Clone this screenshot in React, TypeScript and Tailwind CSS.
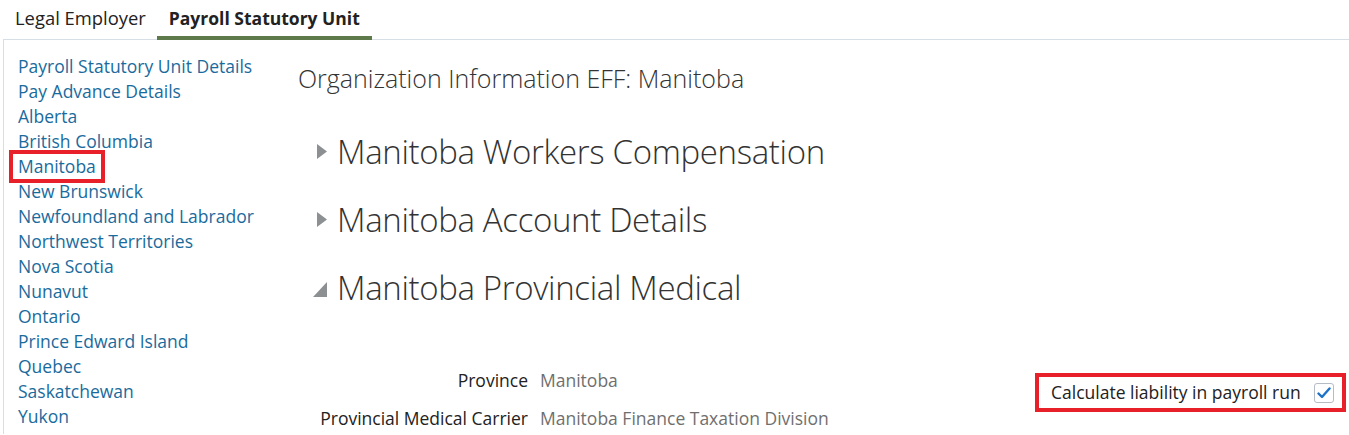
import { useState } from 'react';

const PROVINCES = [
  'Payroll Statutory Unit Details',
  'Pay Advance Details',
  'Alberta',
  'British Columbia',
  'Manitoba',
  'New Brunswick',
  'Newfoundland and Labrador',
  'Northwest Territories',
  'Nova Scotia',
  'Nunavut',
  'Ontario',
  'Prince Edward Island',
  'Quebec',
  'Saskatchewan',
  'Yukon',
];

function Section({ title, open }: { title: string; open?: boolean }) {
  return (
    <div className="flex items-center h-[68px]">
      <div className="w-[39px] flex justify-end pr-[10px]">
        {open ? (
          <svg width="14" height="15" viewBox="0 0 14 15" className="mt-[4px]">
            <polygon points="0,15 14,15 14,0" fill="#8d9093" />
          </svg>
        ) : (
          <svg width="10" height="15" viewBox="0 0 10 15">
            <polygon points="0,0 10,7.5 0,15" fill="#8d9093" />
          </svg>
        )}
      </div>
      <span className="text-[33px] font-light tracking-[-0.35px] text-[#333333] leading-none">{title}</span>
    </div>
  );
}

export default function App() {
  const [checked, setChecked] = useState(true);

  return (
    <div className="w-full h-[435px] bg-white overflow-hidden font-['Open_Sans',sans-serif] text-[#222]">
      <div className="flex h-[40px] items-stretch">
        <div className="pl-[15px] pr-[11px] flex items-center text-[18.4px] pb-[4px]">Legal Employer</div>
        <div className="px-[12px] flex items-center text-[17.5px] font-bold border-b-[4px] border-[#5f7a4a]">
          Payroll Statutory Unit
        </div>
      </div>
      <div className="ml-[3px] border-l border-t border-[#d6dfe6] flex h-[395px] -mt-px">
        <ul className="w-[294px] pl-[14px] pt-[14px] text-[17.5px] leading-[25px] text-[#1a6b9d]">
          {PROVINCES.map((p) => (
            <li key={p}>
              {p === 'Manitoba' ? (
                <span className="relative">
                  {p}
                  <span className="absolute -left-[9px] -right-[9px] -top-[4px] -bottom-[5px] border-[4px] border-[#e8202a]" />
                </span>
              ) : (
                p
              )}
            </li>
          ))}
        </ul>
        <div className="flex-1 pt-[22px]">
          <h1 className="text-[25px] font-light text-[#333333] leading-[32px]">
            Organization Information EFF: Manitoba
          </h1>
          <div className="mt-[23px]">
            <Section title="Manitoba Workers Compensation" />
            <Section title="Manitoba Account Details" />
            <Section title="Manitoba Provincial Medical" open />
          </div>
          <div className="flex mt-[47px] pr-[3px]">
            <div className="grid grid-cols-[230px_auto] gap-x-[12px] gap-y-[13px] text-[17.5px] leading-[25px]">
              <span className="text-right text-[#222]">Province</span>
              <span className="text-[#6f6f6f]">Manitoba</span>
              <span className="text-right text-[#222]">Provincial Medical Carrier</span>
              <span className="text-[#6f6f6f]">Manitoba Finance Taxation Division</span>
            </div>
            <div className="ml-auto mt-[5px]">
              <label className="flex items-center h-[39px] border-[4px] border-[#e8202a] pl-[12px] pr-[8px] text-[17.5px] text-[#222] w-[311px]">
                <span className="flex-1">Calculate liability in payroll run</span>
                <button
                  type="button"
                  onClick={() => setChecked(!checked)}
                  className="w-[20px] h-[20px] border border-[#b5bcc3] rounded-[3px] bg-white flex items-center justify-center"
                >
                  {checked && (
                    <svg width="14" height="12" viewBox="0 0 14 12">
                      <path d="M1.5 6.5 L5 10 L12.5 1.5" stroke="#1e73c8" strokeWidth="2.4" fill="none" strokeLinecap="round" strokeLinejoin="round" />
                    </svg>
                  )}
                </button>
              </label>
            </div>
          </div>
        </div>
      </div>
    </div>
  );
}
